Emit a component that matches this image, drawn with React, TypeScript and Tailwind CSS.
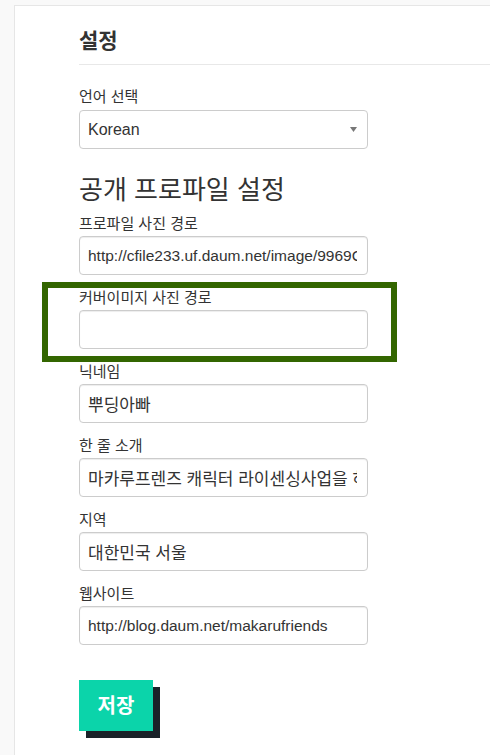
import React from "react";

const font = "font-['Liberation_Sans','Noto_Sans_CJK_KR',sans-serif]";

function Field({ label, value, latin }: { label: string; value: string; latin?: boolean }) {
  return (
    <div className="flex flex-col">
      <label className="h-5 text-[15px] leading-5 text-[#333]">{label}</label>
      <input
        readOnly
        value={value}
        className={
          "mt-[2px] h-[39px] w-[289px] rounded-[4px] border border-[#ccc] bg-white pl-2 pr-[10px] text-[#333] shadow-[inset_0_1px_1px_rgba(0,0,0,0.075)] outline-none " +
          (latin ? "text-[15.5px]" : "text-[17px]")
        }
      />
    </div>
  );
}

export default function App() {
  return (
    <div className={`min-h-[755px] bg-[#f9f9f9] pl-[14px] pt-[5px] ${font}`}>
      <div className="min-h-[750px] border-l border-t border-[#e6e6e6] bg-white pl-[64px] pt-[21px]">
        <h2 className="border-b border-[#e8e8e8] pb-[9px] text-[21px] font-bold leading-7 text-[#333]">
          설정
        </h2>

        <div className="mt-[22px] flex flex-col">
          <label className="h-5 text-[15px] leading-5 text-[#333]">언어 선택</label>
          <div className="relative mt-[3px] flex h-[39px] w-[289px] items-center rounded-[4px] border border-[#ccc] bg-white pl-2 text-[16px] text-[#333]">
            Korean
            <svg
              className="absolute right-[10px] top-[16px]"
              width="7"
              height="5"
              viewBox="0 0 7 5"
            >
              <path d="M0 0h7L3.5 5z" fill="#777" />
            </svg>
          </div>
        </div>

        <h3 className="mt-[25px] text-[26px] font-normal leading-8 text-[#333]">
          공개 프로파일 설정
        </h3>

        <div className="mt-[8px]">
          <Field latin label="프로파일 사진 경로" value="http://cfile233.uf.daum.net/image/9969C63C5A1B2F0E" />
        </div>

        <div className="-ml-[37px] mt-[7px] w-[355px] border-[6px] border-[#336600] pb-[7px] pl-[31px]">
          <Field label="커버이미지 사진 경로" value="" />
        </div>

        <div className="flex flex-col gap-[13px]">
          <Field label="닉네임" value="뿌딩아빠" />
          <Field label="한 줄 소개" value="마카루프렌즈 캐릭터 라이센싱사업을 하고 있습니다." />
          <Field label="지역" value="대한민국 서울" />
          <Field latin label="웹사이트" value="http://blog.daum.net/makarufriends" />
        </div>

        <button className="mt-[35px] h-[51px] w-[74px] bg-[#0bd4aa] text-[20px] font-bold text-white shadow-[7px_7px_0_#1a2229]">
          저장
        </button>
      </div>
    </div>
  );
}
